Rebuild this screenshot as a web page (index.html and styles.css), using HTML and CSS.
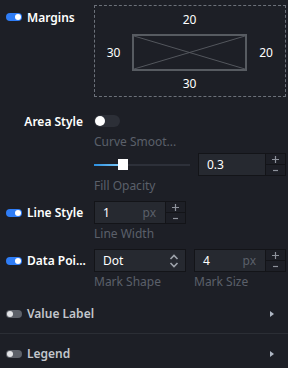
FILE: index.html
```html
<!DOCTYPE html>
<html lang="en">
<head>
  <meta charset="UTF-8">
  <title>Series Style</title>
  <link rel="stylesheet" href="styles.css">
</head>
<body>
  <div class="panel">
    <div class="row margins">
      <div class="label">
        <span class="switch on"></span>
        <span class="title">Margins</span>
      </div>
      <div class="margin-box">
        <span></span><span class="num">20</span><span></span>
        <span class="num">30</span>
        <div class="chart-rect">
          <svg viewBox="0 0 115 37" preserveAspectRatio="none">
            <line x1="0" y1="0" x2="115" y2="37" />
            <line x1="0" y1="37" x2="115" y2="0" />
          </svg>
        </div>
        <span class="num">20</span>
        <span></span><span class="num">30</span><span></span>
      </div>
    </div>

    <div class="row area">
      <div class="label right"><span class="title">Area Style</span></div>
      <div class="field"><span class="switch big"></span></div>
    </div>
    <div class="row hint-row">
      <div></div>
      <div class="hint">Curve Smoot...</div>
    </div>
    <div class="row ctrl">
      <div></div>
      <div class="field gap8">
        <div class="slider"><div class="fill"></div><div class="knob"></div></div>
        <div class="number w68">
          <div class="input"><span class="val">0.3</span></div>
          <div class="spin">
            <span><svg viewBox="0 0 7 7"><path d="M0 3.5H7M3.5 0V7" /></svg></span>
            <span><svg viewBox="0 0 7 7"><path d="M1 3.5H6" /></svg></span>
          </div>
        </div>
      </div>
    </div>
    <div class="row hint-row">
      <div></div>
      <div class="hint">Fill Opacity</div>
    </div>

    <div class="row ctrl mt5">
      <div class="label">
        <span class="switch on"></span>
        <span class="title">Line Style</span>
      </div>
      <div class="field">
        <div class="number w72">
          <div class="input"><span class="val">1</span><span class="unit">px</span></div>
          <div class="spin">
            <span><svg viewBox="0 0 7 7"><path d="M0 3.5H7M3.5 0V7" /></svg></span>
            <span><svg viewBox="0 0 7 7"><path d="M1 3.5H6" /></svg></span>
          </div>
        </div>
      </div>
    </div>
    <div class="row hint-row">
      <div></div>
      <div class="hint">Line Width</div>
    </div>

    <div class="row ctrl mt5">
      <div class="label">
        <span class="switch on"></span>
        <span class="title">Data Poi...</span>
      </div>
      <div class="field gap8">
        <div class="select">
          <span class="val">Dot</span>
          <svg class="updown" viewBox="0 0 10 14">
            <polyline points="1.5,5 5,1.5 8.5,5" />
            <polyline points="1.5,9 5,12.5 8.5,9" />
          </svg>
        </div>
        <div class="number w72">
          <div class="input"><span class="val">4</span><span class="unit">px</span></div>
          <div class="spin">
            <span><svg viewBox="0 0 7 7"><path d="M0 3.5H7M3.5 0V7" /></svg></span>
            <span><svg viewBox="0 0 7 7"><path d="M1 3.5H6" /></svg></span>
          </div>
        </div>
      </div>
    </div>
    <div class="row hint-row">
      <div></div>
      <div class="hint pair"><span>Mark Shape</span><span>Mark Size</span></div>
    </div>

    <div class="section first">
      <span class="switch off"></span>
      <span class="sec-title">Value Label</span>
      <span class="caret"></span>
    </div>
    <div class="section">
      <span class="switch off"></span>
      <span class="sec-title">Legend</span>
      <span class="caret"></span>
    </div>
  </div>
</body>
</html>
```

FILE: styles.css
```css
:root {
  --bg: #1d1f26;
  --input: #262930;
  --edge: #131418;
  --fg: #ffffff;
  --muted: #5b606a;
  --blue: #2f7df6;
}
* { box-sizing: border-box; margin: 0; padding: 0; }
body {
  background: var(--bg);
  color: var(--fg);
  font-family: 'Noto Sans', 'Open Sans', sans-serif;
  font-size: 12px;
  width: 288px;
  height: 368px;
  overflow: hidden;
}
.panel { padding-top: 5px; }
.row { display: grid; grid-template-columns: 94px 192px; }
.label { display: flex; align-items: center; gap: 5px; padding-left: 6px; height: 23px; }
.label.right { justify-content: flex-end; padding-right: 11px; height: 24px; }
.title { font-weight: 600; color: var(--fg); white-space: nowrap; }
.margins .label { height: 24px; }

.switch { display: inline-block; position: relative; width: 16px; height: 8px; border-radius: 4px; flex: none; }
.switch::after { content: ''; position: absolute; top: 1px; width: 6px; height: 6px; border-radius: 50%; background: #fff; }
.switch.on { background: var(--blue); }
.switch.on::after { right: 1px; }
.switch.off { background: #5d6169; }
.switch.off::after { left: 1px; background: #e4e5e8; }
.switch.big { width: 26px; height: 12px; border-radius: 6px; background: #2c2f37; }
.switch.big::after { left: 1px; top: 1px; width: 10px; height: 10px; }

.margin-box {
  height: 92px;
  border: 1px dashed #6c717a;
  display: grid;
  grid-template-columns: 37px 115px 38px;
  grid-template-rows: 28px 37px 25px;
  align-items: center;
  justify-items: center;
}
.num { color: var(--fg); line-height: 1; }
.chart-rect { width: 115px; height: 37px; border: 2px solid #575b61; }
.chart-rect svg { display: block; width: 100%; height: 100%; }
.chart-rect line { stroke: #575b61; stroke-width: 1; }

.area { margin-top: 12px; }
.field { display: flex; align-items: center; }
.gap8 { gap: 8px; }
.hint-row .hint { height: 20px; line-height: 20px; color: var(--muted); }
.area + .hint-row .hint { height: 18px; line-height: 18px; }
.hint.pair { display: flex; }
.hint.pair span:first-child { width: 100px; }
.ctrl { margin-top: 2px; height: 23px; }
.mt5 { margin-top: 5px; }

.slider { position: relative; width: 96px; height: 2px; background: #2d3039; }
.slider .fill { width: 26px; height: 2px; background: linear-gradient(90deg, #2a8ee0, #7cc8f6); }
.slider .knob { position: absolute; left: 24px; top: -5px; width: 10px; height: 11px; background: #fff; }

.number { display: flex; height: 23px; }
.w68 .input { width: 68px; }
.w72 .input { width: 72px; }
.input {
  display: flex;
  align-items: center;
  justify-content: space-between;
  height: 23px;
  padding: 0 9px 0 8px;
  background: var(--input);
  border: 1px solid var(--edge);
}
.val { color: var(--fg); }
.unit { color: var(--muted); }
.spin { display: flex; flex-direction: column; width: 20px; height: 23px; border: 1px solid var(--edge); border-left: none; }
.spin span { flex: 1; display: flex; align-items: center; justify-content: center; }
.spin span + span { border-top: 1px solid var(--edge); }
.spin svg { width: 7px; height: 7px; }
.spin path { stroke: #8d929b; stroke-width: 1.2; fill: none; }

.select {
  display: flex;
  align-items: center;
  justify-content: space-between;
  width: 92px;
  height: 23px;
  padding: 0 6px 0 8px;
  background: var(--input);
  border: 1px solid var(--edge);
}
.updown { width: 10px; height: 14px; }
.updown polyline { fill: none; stroke: #9ea3ab; stroke-width: 1.6; }

.section {
  display: flex;
  align-items: center;
  gap: 5px;
  height: 40px;
  padding: 0 14px 0 6px;
  border-bottom: 1px solid #2b2e35;
}
.section.first { margin-top: 2px; }
.sec-title { flex: 1; color: #c3c6cc; font-weight: 600; }
.caret { width: 0; height: 0; border-top: 3.5px solid transparent; border-bottom: 3.5px solid transparent; border-left: 4px solid #aeb6c3; }
```
